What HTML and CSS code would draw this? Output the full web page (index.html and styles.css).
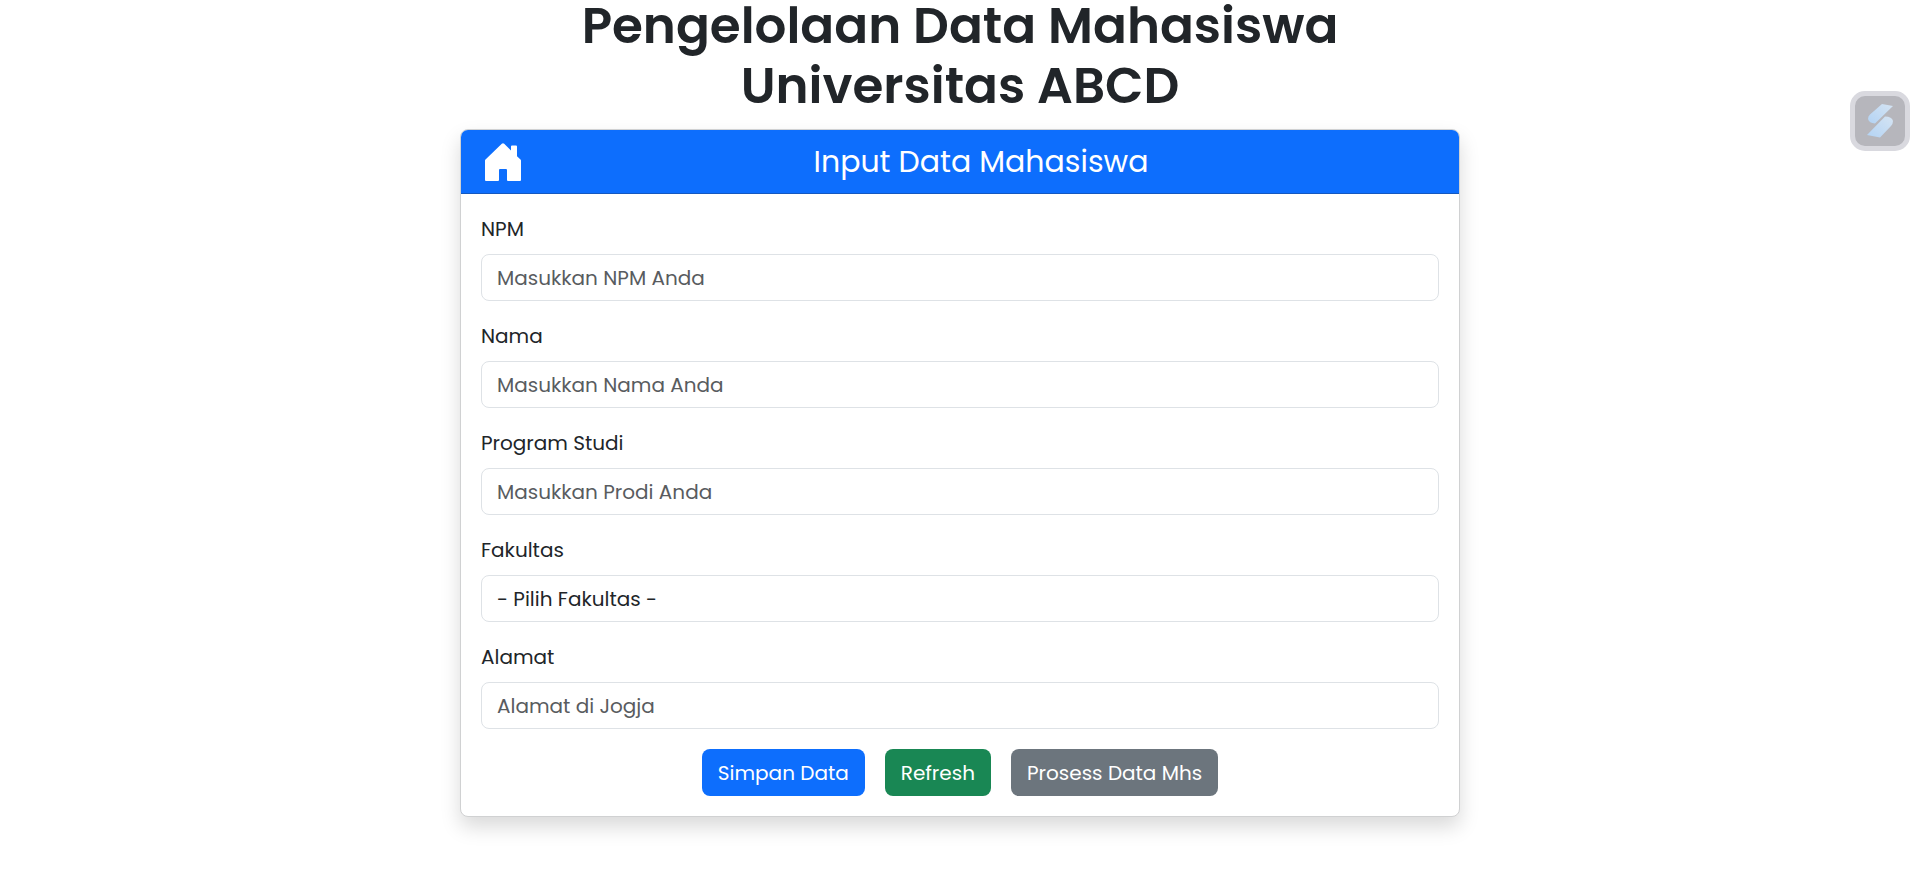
FILE: index.html
```html
<!DOCTYPE html>
<html lang="id">
<head>
<meta charset="utf-8">
<meta name="viewport" content="width=device-width, initial-scale=1">
<title>Pengelolaan Data Mahasiswa</title>
<link rel="stylesheet" href="styles.css">
</head>
<body>
<main class="container">
  <h1 class="title">Pengelolaan Data Mahasiswa<br>Universitas ABCD</h1>
  <section class="card">
    <header class="card-header">
      <a class="home" href="#" aria-label="Beranda">
        <svg class="home-icon" viewBox="-1 0 40 40" aria-hidden="true"><path d="M20 1.2 Q20.600 1.200 21.200 1.800 L28 8.500 V4.500 Q28 3.500 29 3.500 H33 Q34 3.500 34 4.500 V14.200 L37.500 17.500 Q38 18 38 18.800 V38 Q38 39 37 39 H25 Q24 39 24 38 V28 Q24 27 23 27 H17 Q16 27 16 28 V38 Q16 39 15 39 H3 Q2 39 2 38 V18.800 Q2 18 2.500 17.500 L18.800 1.800 Q19.400 1.200 20 1.200 Z"/></svg>
      </a>
      <h2 class="card-title">Input Data Mahasiswa</h2>
    </header>
    <form class="card-body">
      <div class="field">
        <label class="label" for="npm">NPM</label>
        <input class="control" id="npm" type="text" placeholder="Masukkan NPM Anda">
      </div>
      <div class="field">
        <label class="label" for="nama">Nama</label>
        <input class="control" id="nama" type="text" placeholder="Masukkan Nama Anda">
      </div>
      <div class="field">
        <label class="label" for="prodi">Program Studi</label>
        <input class="control" id="prodi" type="text" placeholder="Masukkan Prodi Anda">
      </div>
      <div class="field">
        <label class="label" for="fakultas">Fakultas</label>
        <select class="control" id="fakultas"><option>- Pilih Fakultas -</option></select>
      </div>
      <div class="field">
        <label class="label" for="alamat">Alamat</label>
        <input class="control" id="alamat" type="text" placeholder="Alamat di Jogja">
      </div>
      <div class="actions">
        <button class="btn btn-primary" type="button">Simpan Data</button>
        <button class="btn btn-success" type="reset">Refresh</button>
        <button class="btn btn-secondary" type="button">Prosess Data Mhs</button>
      </div>
    </form>
  </section>
</main>
<button class="floating" type="button" aria-label="Asisten">
  <svg class="floating-icon" viewBox="0 0 50 50" aria-hidden="true">
    <defs><linearGradient id="ribbon" x1="1" y1="0" x2="0" y2="1"><stop offset="0" stop-color="#d5e4f3"/><stop offset="1" stop-color="#b3d3f4"/></linearGradient></defs>
    <path fill="url(#ribbon)" d="M27 8 L38 10 L20 27.500 Q14 27 13 23 Q13 20 15 18.500 Z"/>
    <path fill="url(#ribbon)" d="M30 20.500 Q37 20.500 38 25 Q38 28 36 30 L25 41.500 L12 39 Z"/>
  </svg>
</button>
</body>
</html>
```
FILE: styles.css
```css
* { box-sizing: border-box; }

body {
  display: flow-root;
  min-height: 100vh;
  margin: 0;
  padding-left: 10px;
  background: #fff;
  color: #212529;
  font-family: Poppins, Inter, "Open Sans", sans-serif;
  font-size: 20px;
  font-weight: 400;
  line-height: 30px;
}

.container {
  max-width: 1000px;
  margin: -4px auto 0;
}

.title {
  margin: 0 0 13px;
  font-size: 50px;
  font-weight: 600;
  line-height: 60px;
  text-align: center;
}

.card {
  border: 1px solid #d0d1d2;
  border-radius: 8px;
  background: #fff;
  box-shadow: 0 10px 20px rgba(0, 0, 0, 0.15);
}

.card-header {
  display: flex;
  align-items: center;
  padding: 10px 20px;
  border-bottom: 1px solid #1458bf;
  border-radius: 7px 7px 0 0;
  background: #0d6efd;
  color: #fff;
}

.home {
  display: flex;
  justify-content: center;
  width: 42px;
  padding: 2px 0 1px;
}

.home-icon {
  width: 40px;
  height: 40px;
  fill: #fff;
}

.card-title {
  flex: 1;
  margin: 0;
  font-size: 30px;
  font-weight: 400;
  line-height: 42px;
  text-align: center;
}

.card-body {
  display: flex;
  flex-direction: column;
  gap: 20px;
  padding: 20px;
}

.field {
  display: flex;
  flex-direction: column;
  gap: 10px;
}

.control {
  width: 100%;
  height: 47px;
  padding: 0 15px;
  border: 1px solid #dee2e6;
  border-radius: 8px;
  background: #fff;
  color: #212529;
  font: inherit;
  appearance: none;
}

.control::placeholder {
  color: #595c5f;
  opacity: 1;
}

.actions {
  display: flex;
  justify-content: center;
  gap: 20px;
}

.btn {
  height: 47px;
  padding: 0 16px;
  border: 0;
  border-radius: 8px;
  color: #fff;
  font: inherit;
}

.btn-primary { background: #0d6efd; }
.btn-success { background: #198754; }
.btn-secondary { background: #6c757d; }

.floating {
  position: fixed;
  top: 91px;
  right: 0;
  width: 60px;
  height: 60px;
  padding: 0;
  border: 5px solid #d9d9df;
  border-radius: 15px;
  background: #b6b6bc;
}

.floating-icon {
  display: block;
  width: 50px;
  height: 50px;
}
```
